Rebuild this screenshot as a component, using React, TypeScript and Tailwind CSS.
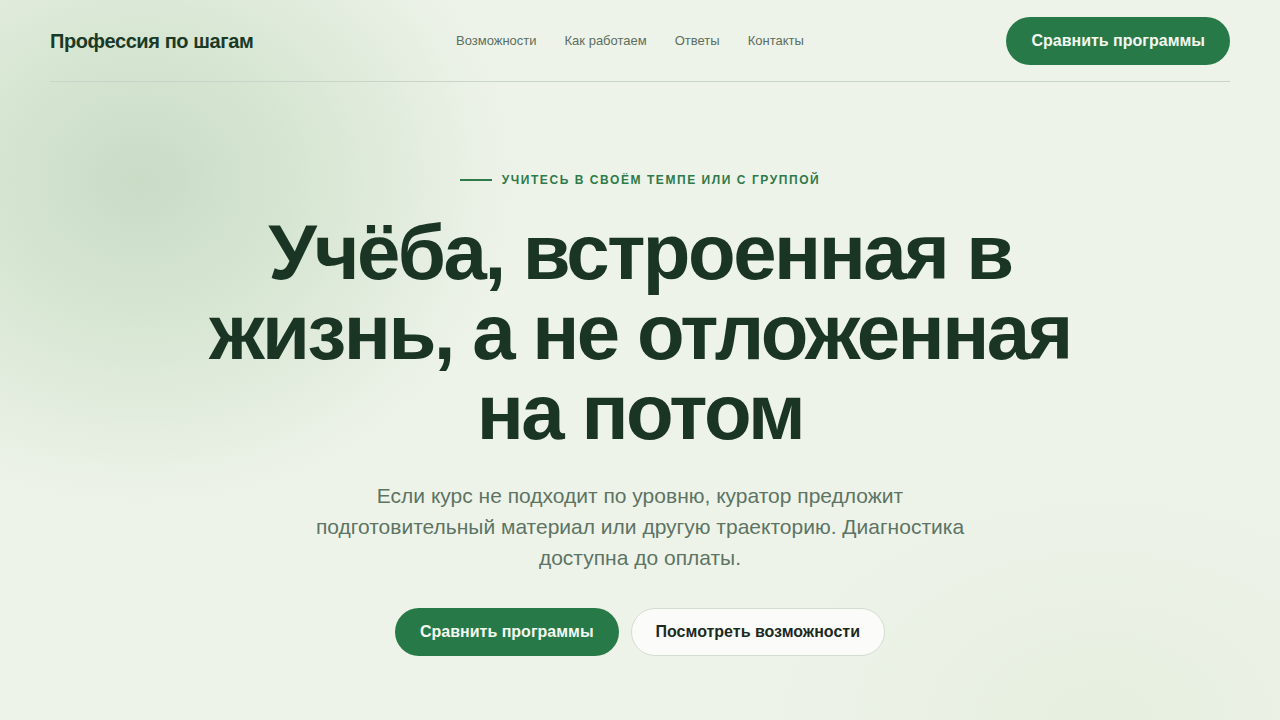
import React from 'react';

const font = { fontFamily: '"Liberation Sans", Arial, sans-serif' };

export default function App() {
  return (
    <div
      className="relative min-h-[720px] w-full overflow-hidden bg-[#eef3e9] text-[#1b3a26]"
      style={font}
    >
      {/* soft background glow */}
      <div className="pointer-events-none absolute -left-[240px] -top-[150px] h-[660px] w-[760px] rounded-full bg-[radial-gradient(closest-side,#c9dcc6_0%,#d6e5d2_40%,rgba(238,243,233,0)_100%)]" />
      <div className="pointer-events-none absolute -bottom-[260px] right-[-200px] h-[520px] w-[760px] rounded-full bg-[radial-gradient(closest-side,#e6efe0_0%,rgba(238,243,233,0)_100%)]" />

      <div className="relative mx-auto w-[1180px]">
        <header className="flex h-[82px] items-center justify-between border-b border-[#c9d5c9]">
          <div className="text-[20px] font-bold tracking-[-0.02em] text-[#1b3a26]">Профессия по шагам</div>
          <nav className="flex items-center gap-7 text-[13px] text-[#5b6e60]">
            <a>Возможности</a>
            <a>Как работаем</a>
            <a>Ответы</a>
            <a>Контакты</a>
          </nav>
          <button className="h-12 rounded-full bg-[#277a48] px-[25px] text-[16px] font-bold text-[#f3f8f1]">
            Сравнить программы
          </button>
        </header>

        <section className="flex flex-col items-center pt-[89px] text-center">
          <div className="flex items-center gap-[10px] text-[12px] font-bold uppercase tracking-[0.13em] text-[#2e7a4a]">
            <span className="h-[2px] w-8 bg-[#2e7a4a]" />
            Учитесь в своём темпе или с группой
          </div>

          <h1 className="mt-[23px] max-w-[900px] text-[78px] font-bold leading-[80px] tracking-[-0.032em] text-[#1a3523]">
            Учёба, встроенная в жизнь, а не отложенная на потом
          </h1>

          <p className="mt-[28px] max-w-[670px] text-[21px] leading-[31px] text-[#5d7464]">
            Если курс не подходит по уровню, куратор предложит подготовительный материал или другую траекторию. Диагностика доступна до оплаты.
          </p>

          <div className="mt-[35px] flex items-center gap-3">
            <button className="h-12 rounded-full bg-[#277a48] px-[25px] text-[16px] font-bold text-[#f3f8f1]">
              Сравнить программы
            </button>
            <button className="h-12 rounded-full border border-[#d4ddd2] bg-[#fbfcf9] px-6 text-[16px] font-bold text-[#1b2a1f]">
              Посмотреть возможности
            </button>
          </div>
        </section>
      </div>
    </div>
  );
}
